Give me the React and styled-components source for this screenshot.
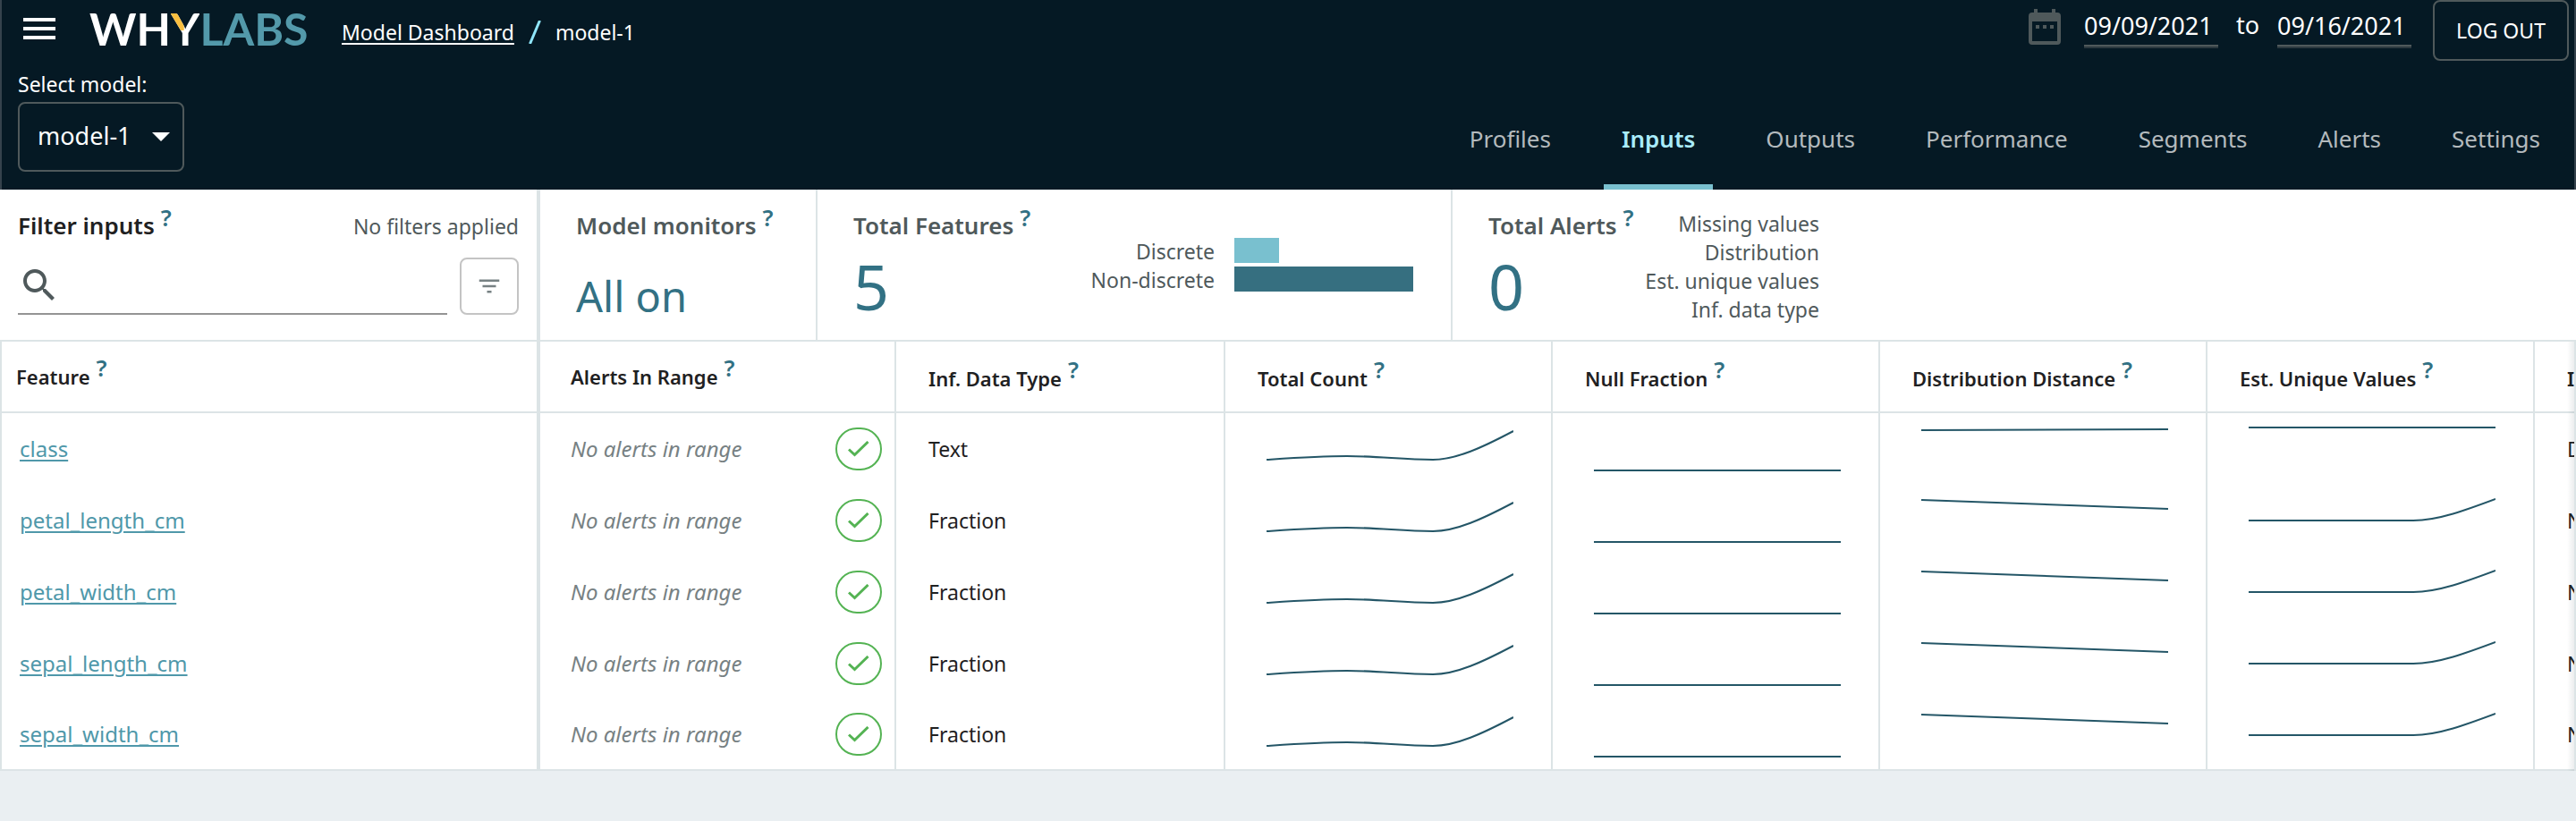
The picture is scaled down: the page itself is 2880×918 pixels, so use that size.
import React from 'react';
import styled, { createGlobalStyle, css } from 'styled-components';

const color = {
  navy: '#051924',
  edge: '#35424c',
  white: '#ffffff',
  muted: '#b4babd',
  slate: '#4f595b',
  ink: '#1f2122',
  line: '#dce4e6',
  teal: '#327184',
  barDark: '#366f80',
  aqua: '#79c0cf',
  cyan: '#a9ecfb',
  link: '#4f98aa',
  green: '#54b353',
  spark: '#245667',
  page: '#eaeff2',
};

const size = {
  heading: '22px',
  small: '23px',
  cell: '24px',
  tab: '26px',
  title: '27px',
  value: '47px',
  count: '70px',
};

const GlobalStyle = createGlobalStyle`
  *, *::before, *::after { box-sizing: border-box; }
  body {
    margin: 0;
    background: ${color.page};
    color: ${color.ink};
    font-family: 'Noto Sans', 'Open Sans', sans-serif;
    font-size: ${size.small};
    line-height: 32px;
    overflow-x: hidden;
  }
  button, input, select { font: inherit; color: inherit; margin: 0; }
  svg { display: block; flex: none; }
`;

/* ---------- header ---------- */

const Header = styled.header`
  background: ${color.navy};
  color: ${color.white};
  border: solid ${color.edge};
  border-width: 0 2px;
`;

const TopBar = styled.div`
  display: flex;
  align-items: center;
  height: 68px;
  padding: 0 6px 0 24px;
`;

const MenuButton = styled.button`
  display: flex;
  padding: 0 0 4px;
  border: 0;
  background: none;
`;

const Logo = styled.a`
  display: flex;
  width: 240px;
  margin-left: 38px;
  padding-bottom: 4px;
  color: ${color.white};
  font: 700 50px/56px Lato, 'Noto Sans', sans-serif;
  text-decoration: none;
`;

const LogoY = styled.span`
  color: transparent;
  background:
    linear-gradient(#fbbf3f, #fbbf3f) 0 0 / 46% 54% no-repeat,
    ${color.white};
  background-clip: text;
  -webkit-background-clip: text;
`;

const LogoLabs = styled.span`
  color: #5399aa;
`;

const Breadcrumbs = styled.nav`
  display: flex;
  align-items: center;
  gap: 16px;
  margin-left: 42px;
  padding-top: 4px;
`;

const CrumbLink = styled.a`
  color: inherit;
  text-decoration: underline 2px;
  text-underline-offset: 3px;
`;

const DateRange = styled.div`
  display: flex;
  align-self: flex-start;
  margin-left: auto;
  font-size: ${size.title};
  line-height: 44px;
`;

const CalendarIcon = styled.svg`
  width: 36px;
  height: 40px;
  margin: 10px 26px 0 0;
`;

const DateInput = styled.input`
  width: 150px;
  height: 52px;
  padding: 6px 0 0;
  border: 0;
  border-bottom: 2px solid ${color.slate};
  border-radius: 0;
  box-shadow: 0 2px #2c393f;
  background: none;
  outline: 0;
`;

const DateSeparator = styled.span`
  width: 66px;
  padding-top: 6px;
  text-align: center;
`;

const LogOut = styled.button`
  align-self: flex-start;
  width: 152px;
  height: 68px;
  margin-left: 24px;
  padding: 0;
  border: 2px solid ${color.slate};
  border-radius: 8px;
  background: none;
`;

const NavBar = styled.div`
  display: flex;
  justify-content: space-between;
  align-items: flex-end;
  padding: 10px 0 0 18px;
`;

const ModelPicker = styled.div`
  display: flex;
  flex-direction: column;
  gap: 4px;
  padding-bottom: 20px;
`;

const SelectBox = styled.div`
  display: grid;
  align-items: center;
  width: 186px;

  > * { grid-area: 1 / 1; }
  > svg { justify-self: end; margin-right: 16px; pointer-events: none; }
`;

const ModelSelect = styled.select`
  appearance: none;
  height: 78px;
  padding: 0 0 2px 20px;
  border: 2px solid ${color.slate};
  border-radius: 8px;
  background: ${color.navy};
  font-size: ${size.title};
`;

const Tabs = styled.nav`
  display: flex;
  gap: 39px;
  padding-right: 18px;
`;

const Tab = styled.a`
  height: 108px;
  padding: 0 20px;
  border-bottom: 6px solid transparent;
  color: ${color.muted};
  font-size: ${size.tab};
  line-height: 102px;
  text-decoration: none;

  ${({ $active }) => $active && css`
    border-color: ${color.aqua};
    color: ${color.cyan};
    font-weight: 600;
  `}
`;

/* ---------- summary strip ---------- */

const Summary = styled.section`
  display: flex;
  height: 170px;
  background: ${color.white};
  border-bottom: 2px solid ${color.line};
  color: ${color.slate};
`;

const FilterPanel = styled.div`
  flex: 0 0 604px;
  padding: 20px 20px 0;
  border-right: 4px solid ${color.line};
`;

const FilterHeading = styled.div`
  display: flex;
  justify-content: space-between;
  align-items: baseline;
`;

const Title = styled.h2`
  margin: 0;
  color: ${({ $dark }) => ($dark ? color.ink : 'inherit')};
  font-size: ${size.tab};
  font-weight: 600;
  line-height: 40px;
  white-space: nowrap;
`;

const HelpMark = styled.sup`
  margin-left: 7px;
  color: ${color.teal};
  font-size: ${size.tab};
  font-weight: 600;
  line-height: 0;
  vertical-align: 9px;
`;

const FilterControls = styled.div`
  display: flex;
  gap: 14px;
  margin-top: 16px;
`;

const SearchField = styled.label`
  display: flex;
  flex: 1;
  align-items: center;
  height: 64px;
  border-bottom: 2px solid #949494;
`;

const SearchInput = styled.input`
  flex: 1;
  min-width: 0;
  border: 0;
  outline: 0;
  background: none;
`;

const FilterButton = styled.button`
  display: grid;
  place-items: center;
  width: 66px;
  height: 64px;
  padding: 0;
  border: 2px solid #c4c4c4;
  border-radius: 8px;
  background: none;
`;

const Metric = styled.div`
  display: flex;
  flex: 0 0 ${({ $width }) => $width}px;
  justify-content: space-between;
  padding: 20px 0 0 40px;
  border-right: ${({ $last }) => ($last ? 0 : 2)}px solid ${color.line};
`;

const MetricValue = styled.p`
  margin: ${({ $count }) => ($count ? 8 : 27)}px 0 0;
  color: ${color.teal};
  font-size: ${({ $count }) => ($count ? size.count : size.value)};
  line-height: ${({ $count }) => ($count ? 80 : 64)}px;
`;

const BarChart = styled.dl`
  display: grid;
  grid-template-columns: auto 200px;
  grid-auto-rows: 28px;
  gap: 4px 22px;
  margin: 34px 42px 0 0;
  line-height: 30px;
  text-align: right;

  dd { margin: 0; }
`;

const Bar = styled.div`
  height: 28px;
  background: ${({ $tone }) => $tone};
`;

const AlertList = styled.ul`
  margin: 0;
  padding: 2px 0 0;
  list-style: none;
  text-align: right;
`;

/* ---------- feature table ---------- */

const TableScroller = styled.div`
  position: relative;
  overflow: hidden;

  &::after {
    content: '';
    position: absolute;
    inset: 0 0 0 auto;
    width: 10px;
    border-right: 2px solid ${color.line};
    background: linear-gradient(to right, transparent, rgba(5, 25, 36, 0.08));
  }
`;

const Table = styled.table`
  width: 3200px;
  table-layout: fixed;
  border-collapse: separate;
  border-spacing: 0;
  background: ${color.white};
  border-bottom: 2px solid ${color.line};
`;

const Col = styled.col`
  width: ${({ $width }) => $width}px;
`;

const cell = css`
  padding: 0 0 0 36px;
  border-right: 2px solid ${color.line};
  text-align: left;
  white-space: nowrap;

  &:first-child {
    border-left: 2px solid ${color.line};
    border-right-width: 4px;
  }
  &:nth-child(2) { padding-left: 34px; }
`;

const HeadCell = styled.th`
  ${cell}
  height: 80px;
  border-bottom: 2px solid ${color.line};
  font-size: ${size.heading};
  font-weight: 600;
  &:first-child { padding-left: 16px; }
  &:nth-child(n + 3) { padding-top: 4px; }
`;

const BodyCell = styled.td`
  ${cell}
  height: 80px;
  &:first-child { padding-left: 20px; }
  tr:last-child > & { height: 78px; }
`;

const ChartCell = styled(BodyCell)`
  vertical-align: top;
`;

const FeatureLink = styled.a`
  color: ${color.link};
  font-size: ${size.cell};
  text-decoration: underline 2px;
  text-underline-offset: 3px;
`;

const AlertStatus = styled.div`
  display: flex;
  justify-content: space-between;
  align-items: center;
  padding-right: 14px;
  color: #778183;
  font-size: ${size.cell};
  font-style: italic;
`;

const CheckBadge = styled.span`
  display: grid;
  place-items: center;
  width: 52px;
  height: 48px;
  border: 2px solid ${color.green};
  border-radius: 24px;
`;

const Sparkline = styled.svg`
  width: 276px;
  height: 78px;
  margin-left: 10px;
  fill: none;
  stroke: ${color.spark};
  stroke-width: 2;
`;

const shapes = {
  count: 'M0 52 C30 50 58 48 90 48 C126 48 152 52 186 52 C212 52 242 38 276 20',
  nulls: 'M0 64 H276',
  distanceFlat: 'M0 19 L276 18',
  distance: 'M0 17 L276 27',
  uniqueFlat: 'M0 16 H276',
  unique: 'M0 40 H184 C212 40 244 28 276 16',
};

const tabs = ['Profiles', 'Inputs', 'Outputs', 'Performance', 'Segments', 'Alerts', 'Settings'];

const columns = [
  ['Feature', 604],
  ['Alerts In Range', 398],
  ['Inf. Data Type', 368],
  ['Total Count', 366],
  ['Null Fraction', 366],
  ['Distribution Distance', 366],
  ['Est. Unique Values', 366],
  ['Inf. Discreteness', 366],
];

const features = [
  { name: 'class', type: 'Text', distance: 'distanceFlat', unique: 'uniqueFlat', kind: 'Discrete' },
  ...['petal_length_cm', 'petal_width_cm', 'sepal_length_cm', 'sepal_width_cm'].map((name) => ({
    name,
    type: 'Fraction',
    distance: 'distance',
    unique: 'unique',
    kind: 'Non-discrete',
  })),
];

const bars = [
  { label: 'Discrete', count: 1, tone: color.aqua },
  { label: 'Non-discrete', count: 4, tone: color.barDark },
];

const alertKinds = ['Missing values', 'Distribution', 'Est. unique values', 'Inf. data type'];

const Help = () => <HelpMark>?</HelpMark>;

const Spark = ({ shape }) => (
  <Sparkline viewBox="0 0 276 78" aria-hidden="true">
    <path d={shapes[shape]} />
  </Sparkline>
);

function AppHeader() {
  return (
    <Header>
      <TopBar>
        <MenuButton aria-label="Open menu">
          <svg width="36" height="24" viewBox="0 0 36 24" fill="#fff">
            <path d="M0 0h36v4H0zM0 10h36v4H0zM0 20h36v4H0z" />
          </svg>
        </MenuButton>
        <Logo href="#home">
          WH<LogoY>Y</LogoY><LogoLabs>LABS</LogoLabs>
        </Logo>
        <Breadcrumbs aria-label="Breadcrumb">
          <CrumbLink href="#models">Model Dashboard</CrumbLink>
          <svg width="14" height="26" viewBox="0 0 14 26" stroke="#8fe6fa" strokeWidth="3">
            <path d="M12.5 0L1.5 26" />
          </svg>
          <span>model-1</span>
        </Breadcrumbs>
        <DateRange>
          <CalendarIcon viewBox="0 0 36 40" fill="#4f595b">
            <path
              fillRule="evenodd"
              d="M6 0h4v4h16V0h4v4h2a4 4 0 0 1 4 4v28a4 4 0 0 1-4 4H4a4 4 0 0 1-4-4V8a4 4 0 0 1 4-4h2zM4 14v22h28V14z"
            />
            <path d="M8 18h4v4H8zM16 18h4v4h-4zM24 18h4v4h-4z" />
          </CalendarIcon>
          <DateInput aria-label="Start date" defaultValue="09/09/2021" />
          <DateSeparator>to</DateSeparator>
          <DateInput aria-label="End date" defaultValue="09/16/2021" />
        </DateRange>
        <LogOut>LOG OUT</LogOut>
      </TopBar>
      <NavBar>
        <ModelPicker>
          <label htmlFor="model">Select model:</label>
          <SelectBox>
            <ModelSelect id="model" defaultValue="model-1">
              <option>model-1</option>
            </ModelSelect>
            <svg width="20" height="10" viewBox="0 0 20 10" fill="#fff">
              <path d="M0 0h20L10 10z" />
            </svg>
          </SelectBox>
        </ModelPicker>
        <Tabs aria-label="Model sections">
          {tabs.map((tab) => (
            <Tab key={tab} href={`#${tab.toLowerCase()}`} $active={tab === 'Inputs'}>
              {tab}
            </Tab>
          ))}
        </Tabs>
      </NavBar>
    </Header>
  );
}

function SummaryStrip() {
  return (
    <Summary>
      <FilterPanel>
        <FilterHeading>
          <Title $dark>Filter inputs<Help /></Title>
          <span>No filters applied</span>
        </FilterHeading>
        <FilterControls>
          <SearchField>
            <svg width="48" height="48" viewBox="0 0 24 24" fill="#4f595b">
              <path d="M15.5 14h-.79l-.28-.27C15.41 12.59 16 11.11 16 9.5 16 5.91 13.09 3 9.5 3S3 5.91 3 9.5 5.91 16 9.5 16c1.61 0 3.09-.59 4.23-1.57l.27.28v.79l5 4.99L20.49 19l-4.99-5zm-6 0C7.01 14 5 11.99 5 9.5S7.01 5 9.5 5 14 7.01 14 9.5 11.99 14 9.5 14z" />
            </svg>
            <SearchInput type="text" aria-label="Search inputs" />
          </SearchField>
          <FilterButton aria-label="Filter options">
            <svg width="30" height="30" viewBox="0 0 24 24" fill="#778183">
              <path d="M10 18h4v-2h-4v2zM3 6v2h18V6H3zm3 7h12v-2H6v2z" />
            </svg>
          </FilterButton>
        </FilterControls>
      </FilterPanel>
      <Metric $width={310}>
        <div>
          <Title>Model monitors<Help /></Title>
          <MetricValue>All on</MetricValue>
        </div>
      </Metric>
      <Metric $width={710}>
        <div>
          <Title>Total Features<Help /></Title>
          <MetricValue $count>5</MetricValue>
        </div>
        <BarChart>
          {bars.map(({ label, count, tone }) => (
            <React.Fragment key={label}>
              <dt>{label}</dt>
              <dd>
                <Bar $tone={tone} style={{ width: `${count * 25}%` }} />
              </dd>
            </React.Fragment>
          ))}
        </BarChart>
      </Metric>
      <Metric $width={410} $last>
        <div>
          <Title>Total Alerts<Help /></Title>
          <MetricValue $count>0</MetricValue>
        </div>
        <AlertList>
          {alertKinds.map((kind) => <li key={kind}>{kind}</li>)}
        </AlertList>
      </Metric>
    </Summary>
  );
}

function FeatureTable() {
  return (
    <TableScroller>
      <Table>
        <colgroup>
          {columns.map(([label, width]) => <Col key={label} $width={width} />)}
        </colgroup>
        <thead>
          <tr>
            {columns.map(([label]) => (
              <HeadCell key={label} scope="col">{label}<Help /></HeadCell>
            ))}
          </tr>
        </thead>
        <tbody>
          {features.map(({ name, type, distance, unique, kind }) => (
            <tr key={name}>
              <BodyCell><FeatureLink href={`#${name}`}>{name}</FeatureLink></BodyCell>
              <BodyCell>
                <AlertStatus>
                  No alerts in range
                  <CheckBadge>
                    <svg width="24" height="18" viewBox="0 0 24 18" fill="none" stroke={color.green} strokeWidth="3">
                      <path d="M1 9.500L7.500 15.500L22.500 1" />
                    </svg>
                  </CheckBadge>
                </AlertStatus>
              </BodyCell>
              <BodyCell>{type}</BodyCell>
              <ChartCell><Spark shape="count" /></ChartCell>
              <ChartCell><Spark shape="nulls" /></ChartCell>
              <ChartCell><Spark shape={distance} /></ChartCell>
              <ChartCell><Spark shape={unique} /></ChartCell>
              <BodyCell>{kind}</BodyCell>
            </tr>
          ))}
        </tbody>
      </Table>
    </TableScroller>
  );
}

export default function App() {
  return (
    <>
      <GlobalStyle />
      <AppHeader />
      <main>
        <SummaryStrip />
        <FeatureTable />
      </main>
    </>
  );
}
